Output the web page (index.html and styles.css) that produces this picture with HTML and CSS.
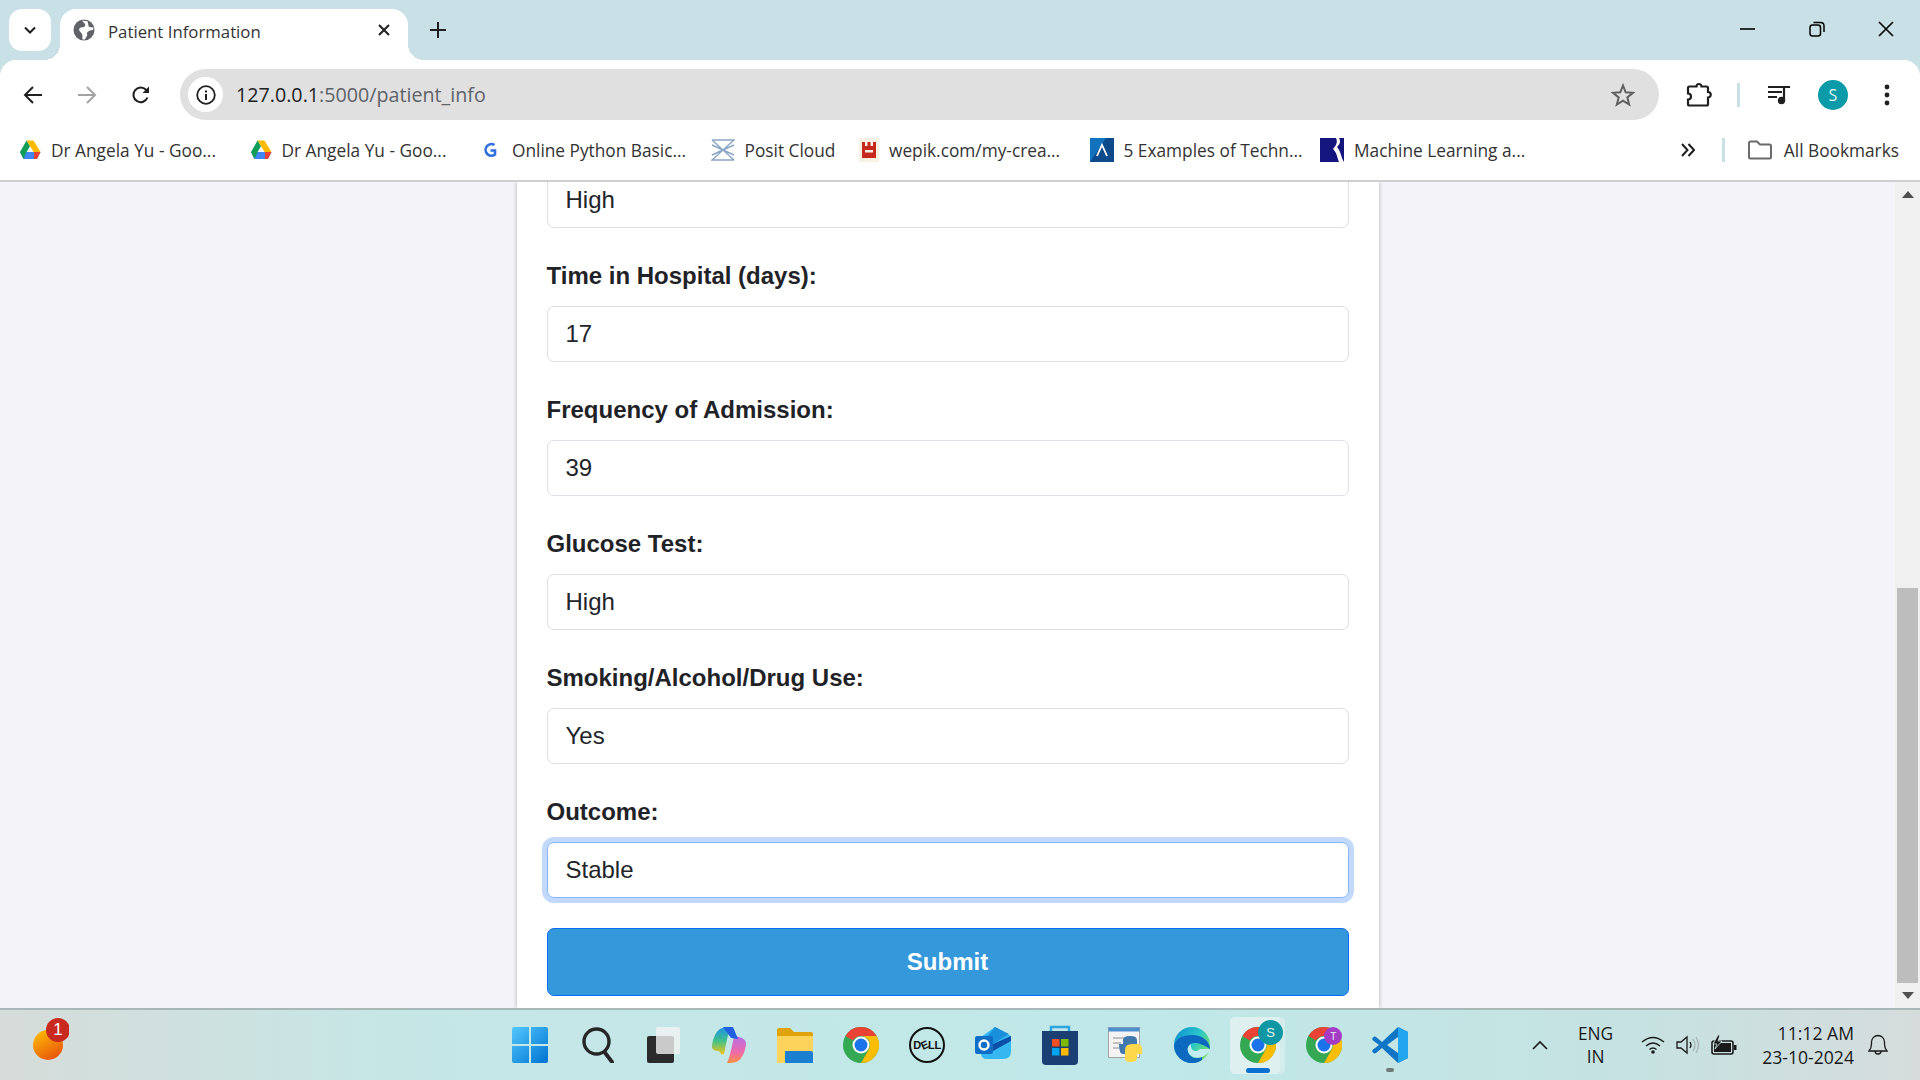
FILE: index.html
```html
<!DOCTYPE html>
<html lang="en">

<head>
    <meta charset="UTF-8">
    <title>Patient Information</title>
    <link rel="stylesheet" href="styles.css">
</head>

<body>
    <div class="tab-strip">
        <div class="tab-search">
            <svg width="16" height="16" viewBox="0 0 16 16"><path d="M3 5.5 8 10.5 13 5.5" fill="none" stroke="#1f1f1f" stroke-width="2"/></svg>
        </div>
        <div class="tab">
            <svg class="tab-globe" width="22" height="22" viewBox="0 0 22 22">
                <circle cx="11" cy="11" r="10.5" fill="#5f6368"/>
                <path d="M9 1.5C11 4 13 5 12 7 11 9 8 7.500 6.5 9.500 5 11.500 8 13 9 15 10 17 9 19 9.500 20.500L12 20.500C13 18 15 16.500 14 14.500 13.500 13 16 12 17 11.500L20 11 20.500 8.500 16 8C15 5.500 15 3 14.500 2.200Z" fill="#fff"/>
            </svg>
            <span class="tab-title">Patient Information</span>
            <svg width="14" height="14" viewBox="0 0 14 14"><path d="M2 2 12 12M12 2 2 12" stroke="#1f1f1f" stroke-width="2"/></svg>
        </div>
        <svg class="new-tab" width="16" height="16" viewBox="0 0 16 16"><path d="M8 0V16M0 8H16" stroke="#1f1f1f" stroke-width="2"/></svg>
        <div class="window-btns">
            <svg width="16" height="16" viewBox="0 0 16 16"><path d="M0 8H15" stroke="#000" stroke-width="1.6"/></svg>
            <svg width="16" height="16" viewBox="0 0 16 16" fill="none" stroke="#000" stroke-width="1.5"><rect x="1" y="4" width="10.5" height="11" rx="2.5"/><path d="M4.5 1.5H11.5Q15 1.500 15 5V11"/></svg>
            <svg width="16" height="16" viewBox="0 0 16 16"><path d="M1 1 15 15M15 1 1 15" stroke="#000" stroke-width="1.6"/></svg>
        </div>
    </div>

    <div class="toolbar">
        <svg class="nav-icon" width="20" height="20" viewBox="0 0 20 20" fill="none" stroke="#1f1f1f" stroke-width="2"><path d="M19 10H2M10 2 2 10 10 18"/></svg>
        <svg class="nav-icon" width="20" height="20" viewBox="0 0 20 20" fill="none" stroke="#a3a3a3" stroke-width="2"><path d="M1 10H18M10 2 18 10 10 18"/></svg>
        <svg class="nav-icon" width="20" height="20" viewBox="0 0 20 20" fill="none" stroke="#1f1f1f" stroke-width="2"><path d="M16.5 12.5A7.3 7.3 0 1 1 15 4.800L17.500 7"/><path d="M18 1.500V8H11.500" fill="#1f1f1f" stroke="none"/></svg>
        <div class="omnibox">
            <div class="site-info">
                <svg width="20" height="20" viewBox="0 0 20 20"><circle cx="10" cy="10" r="8.8" fill="none" stroke="#1f1f1f" stroke-width="1.8"/><rect x="9" y="9" width="2" height="6" fill="#1f1f1f"/><rect x="9" y="5.5" width="2" height="2" fill="#1f1f1f"/></svg>
            </div>
            <span class="url">127.0.0.1<span class="url-path">:5000/patient_info</span></span>
            <svg class="star" width="24" height="24" viewBox="0 0 24 24"><path d="M12 2.5 14.700 9.300 22 9.800 16.300 14.400 18.200 21.500 12 17.600 5.800 21.500 7.700 14.400 2 9.800 9.300 9.300Z" fill="none" stroke="#5f5f5f" stroke-width="2"/></svg>
        </div>
        <svg class="ext-icon" width="26" height="26" viewBox="0 0 26 26"><path d="M9 4.500H10.500A2.500 2.500 0 0 1 15.500 4.500H20.500A1.500 1.500 0 0 1 22 6V10A2.600 2.600 0 0 1 22 15.500V22A1.500 1.500 0 0 1 20.500 23.500H3.500A1.500 1.500 0 0 1 2 22V17.500A3 3 0 0 0 2 11.500V6A1.500 1.500 0 0 1 3.500 4.500Z" fill="none" stroke="#1f1f1f" stroke-width="2.2"/></svg>
        <div class="tool-sep"></div>
        <svg class="media-icon" width="24" height="22" viewBox="0 0 24 22"><path d="M1 3H17M1 8H15M1 13H10" stroke="#1f1f1f" stroke-width="2"/><path d="M17 16V3H23" fill="none" stroke="#1f1f1f" stroke-width="2.2"/><circle cx="14.5" cy="16.5" r="3.7" fill="#1f1f1f"/></svg>
        <div class="avatar">S</div>
        <svg class="menu-icon" width="6" height="24" viewBox="0 0 6 24"><circle cx="3" cy="4" r="2.4"/><circle cx="3" cy="12" r="2.4"/><circle cx="3" cy="20" r="2.4"/></svg>
    </div>

    <div class="bookmarks">
        <a class="bookmark">
            <svg width="22" height="20" viewBox="0 0 22 20"><path d="M7.5 0.500H14.500L21.500 12H14.500Z" fill="#ffba00"/><path d="M1 12H21.500L18 19H4.500Z" fill="#4285f4"/><path d="M15 12H21.500L18 19H15Z" fill="#ea4335"/><path d="M7.500 0.500 11 6.500 7.500 12 4.500 19 1 12Z" fill="#0f9d58"/><path d="M8.500 12H14L11 6.500Z" fill="#fff"/></svg>
            <span>Dr Angela Yu - Goo...</span>
        </a>
        <a class="bookmark">
            <svg width="22" height="20" viewBox="0 0 22 20"><path d="M7.5 0.500H14.500L21.500 12H14.500Z" fill="#ffba00"/><path d="M1 12H21.500L18 19H4.500Z" fill="#4285f4"/><path d="M15 12H21.500L18 19H15Z" fill="#ea4335"/><path d="M7.500 0.500 11 6.500 7.500 12 4.500 19 1 12Z" fill="#0f9d58"/><path d="M8.500 12H14L11 6.500Z" fill="#fff"/></svg>
            <span>Dr Angela Yu - Goo...</span>
        </a>
        <a class="bookmark">
            <svg width="22" height="20" viewBox="0 0 22 20" fill="none"><path d="M14.500 5A5.800 5.800 0 1 0 15 14.500V10.500H10.500" stroke="#2f6fe0" stroke-width="2.6"/></svg>
            <span>Online Python Basic...</span>
        </a>
        <a class="bookmark bookmark-short">
            <svg width="24" height="22" viewBox="0 0 24 22" fill="none" stroke="#8aa6c4" stroke-width="1.4"><path d="M1 1H23L1 21H23M1 1 23 21M1 6 23 16M23 6 1 16"/></svg>
            <span>Posit Cloud</span>
        </a>
        <a class="bookmark">
            <svg width="20" height="24" viewBox="0 0 20 24"><rect width="20" height="24" fill="#f8f2e4"/><path d="M3 4H6V8H8.500V4H11.500V8H14V4H17V20H3Z" fill="#c5281c"/><rect x="6" y="12" width="8" height="2.5" fill="#f8f2e4"/></svg>
            <span>wepik.com/my-crea...</span>
        </a>
        <a class="bookmark">
            <svg width="24" height="24" viewBox="0 0 24 24"><rect width="24" height="24" fill="#0d4a8c"/><path d="M0 0H16L0 24Z" fill="#1272bd"/><path d="M7 18 12 7 17 18" fill="none" stroke="#fff" stroke-width="1.8"/></svg>
            <span>5 Examples of Techn...</span>
        </a>
        <a class="bookmark">
            <svg width="24" height="24" viewBox="0 0 24 24"><rect width="24" height="24" fill="#15157e"/><path d="M16 0H19C21 3 20 6 17 9 21 13 21 20 24 24H19C17 19 17 15 13 11 16 8 18 4 16 0Z" fill="#fff"/></svg>
            <span>Machine Learning a...</span>
        </a>
        <svg class="more-marks" width="14" height="14" viewBox="0 0 14 14" fill="none" stroke="#1f1f1f" stroke-width="2"><path d="M1 1 6.500 7 1 13M7.500 1 13 7 7.500 13"/></svg>
        <div class="marks-sep"></div>
        <svg width="24" height="20" viewBox="0 0 24 20" fill="none" stroke="#6b6b6b" stroke-width="2"><path d="M1 3A1.500 1.500 0 0 1 2.500 1.500H9L12 4.500H21.500A1.500 1.500 0 0 1 23 6V17A1.500 1.500 0 0 1 21.500 18.500H2.500A1.500 1.500 0 0 1 1 17Z"/></svg>
        <span class="all-marks">All Bookmarks</span>
    </div>

    <div class="viewport">
        <div class="page">
            <form class="card">
                <div class="cut-field">
                    <input class="field-input" type="text" value="High">
                </div>
                <div class="field">
                    <label class="field-label">Time in Hospital (days):</label>
                    <input class="field-input" type="text" value="17">
                </div>
                <div class="field">
                    <label class="field-label">Frequency of Admission:</label>
                    <input class="field-input" type="text" value="39">
                </div>
                <div class="field">
                    <label class="field-label">Glucose Test:</label>
                    <input class="field-input" type="text" value="High">
                </div>
                <div class="field">
                    <label class="field-label">Smoking/Alcohol/Drug Use:</label>
                    <input class="field-input" type="text" value="Yes">
                </div>
                <div class="field">
                    <label class="field-label">Outcome:</label>
                    <input class="field-input focused" type="text" value="Stable">
                </div>
                <button class="submit-btn" type="button">Submit</button>
            </form>
        </div>
        <div class="scrollbar">
            <div class="scroll-arrow"><svg width="12" height="7" viewBox="0 0 12 7"><path d="M6 0 12 7H0Z" fill="#505050"/></svg></div>
            <div class="scroll-track">
                <div class="scroll-thumb"></div>
            </div>
            <div class="scroll-arrow"><svg width="12" height="7" viewBox="0 0 12 7"><path d="M0 0H12L6 7Z" fill="#505050"/></svg></div>
        </div>
    </div>

    <div class="taskbar">
        <div class="task-left">
            <svg width="36" height="44" viewBox="0 0 36 44">
                <defs><linearGradient id="sunGrad" x1="0" y1="0" x2="0.6" y2="1"><stop offset="0" stop-color="#ffc400"/><stop offset="1" stop-color="#e8590c"/></linearGradient></defs>
                <circle cx="15" cy="27" r="15" fill="url(#sunGrad)"/>
                <circle cx="25" cy="12" r="12" fill="#c92a1f"/>
            </svg>
            <span class="badge-num">1</span>
        </div>
        <div class="task-apps">
            <svg class="task-icon" width="36" height="36" viewBox="0 0 36 36">
                <defs><linearGradient id="winGrad" x1="0" y1="0" x2="1" y2="1"><stop offset="0" stop-color="#52c8fb"/><stop offset="1" stop-color="#0072d2"/></linearGradient></defs>
                <path d="M0 2Q0 0 2 0H17V17H0ZM19 0H34Q36 0 36 2V17H19ZM0 19H17V36H2Q0 36 0 34ZM19 19H36V34Q36 36 34 36H19Z" fill="url(#winGrad)"/>
            </svg>
            <svg class="task-icon" width="36" height="36" viewBox="0 0 36 36" fill="none" stroke="#262626"><circle cx="18.5" cy="14.5" r="12.500" stroke-width="3.4"/><path d="M26.500 25 34 35" stroke-width="3.8" stroke-linecap="round"/></svg>
            <svg class="task-icon" width="36" height="36" viewBox="0 0 36 36"><rect x="3" y="9" width="27" height="27" rx="2" fill="#2b2b2b"/><rect x="12" y="0" width="24" height="27" rx="2" fill="#f2f2f2" fill-opacity=".8"/></svg>
            <svg class="task-icon" width="36" height="36" viewBox="0 0 36 36">
                <defs><linearGradient id="copA" x1="0" y1="0" x2="0" y2="1"><stop offset="0" stop-color="#1f8fe8"/><stop offset=".5" stop-color="#3fc08a"/><stop offset="1" stop-color="#f5c518"/></linearGradient><linearGradient id="copB" x1="0" y1="0" x2="0" y2="1"><stop offset="0" stop-color="#b66ee8"/><stop offset=".6" stop-color="#ee6ba8"/><stop offset="1" stop-color="#f9913f"/></linearGradient></defs>
                <path d="M9 2Q12 0 20 0 17 6 14 22 13 32 8 24 0 24 1 18 3 6 9 2Z" fill="url(#copA)"/>
                <path d="M27 34Q24 36 16 36 19 30 22 14 23 8 28 10 36 12 35 18 33 30 27 34Z" fill="url(#copB)"/>
                <path d="M12 0H22L27 12 20 11Z" fill="#1f5fe0"/>
            </svg>
            <svg class="task-icon" width="36" height="36" viewBox="0 0 36 36"><path d="M0 3Q0 1 2 1H13L17 5H34Q36 5 36 7V10H0Z" fill="#e0a30c"/><path d="M0 9H36V34Q36 36 34 36H0Z" fill="#fdd35c"/><path d="M8 24H34Q36 24 36 26V36H8Z" fill="#1a7fd1"/></svg>
            <svg class="task-icon" width="36" height="36" viewBox="0 0 36 36">
                <circle cx="18" cy="18" r="18" fill="#34a853"/>
                <path d="M18 0A18 18 0 0 1 33.600 9H18A9 9 0 0 0 10 13.500L2.400 9A18 18 0 0 1 18 0Z" fill="#ea4335"/>
                <path d="M33.600 9A18 18 0 0 1 18 36L26 22A9 9 0 0 0 18 9Z" fill="#fbbc04"/>
                <circle cx="18" cy="18" r="8.5" fill="#fff"/><circle cx="18" cy="18" r="6.5" fill="#1a73e8"/>
            </svg>
            <div class="dell-logo"><span>D<i>E</i>LL</span></div>
            <svg class="task-icon" width="36" height="36" viewBox="0 0 36 36">
                <path d="M20 0 36 9V24Q36 32 28 32H12Q6 32 6 26V10Z" fill="#35b8f1"/>
                <path d="M20 0 34 7 16 18 10 12Z" fill="#1a8fdb"/>
                <path d="M36 9V14L18 24V17Z" fill="#0b4fa8"/>
                <rect x="0" y="9" width="18" height="18" rx="2" fill="#0f6fc8"/>
                <circle cx="9" cy="18" r="4.5" fill="none" stroke="#fff" stroke-width="2.4"/>
            </svg>
            <svg class="task-icon" width="36" height="40" viewBox="0 0 36 40">
                <path d="M9 8V2H27V8" fill="none" stroke="#2ba4e0" stroke-width="2.5"/>
                <path d="M0 6H36V36Q36 40 32 40H4Q0 40 0 36Z" fill="#1b3f72"/>
                <rect x="10" y="14" width="7.5" height="7.5" fill="#f25022"/><rect x="19" y="14" width="7.5" height="7.5" fill="#7fba00"/><rect x="10" y="23" width="7.5" height="7.5" fill="#00a4ef"/><rect x="19" y="23" width="7.5" height="7.5" fill="#ffb900"/>
            </svg>
            <svg class="task-icon" width="36" height="36" viewBox="0 0 36 36">
                <rect x="0.5" y="0.5" width="31" height="30" fill="#f4f4f4" stroke="#a5a5a5"/><rect x="0.5" y="0.5" width="31" height="4" fill="#4d8fd0"/>
                <path d="M5 11H16M5 16H13M5 21H11" stroke="#b0b0b0" stroke-width="1.5"/>
                <path d="M22 9Q15 9 15 13V17H11Q11 27 15 27H22Q29 27 29 22H17 29V13Q29 9 22 9Z" fill="#3f78ad"/>
                <path d="M22 35Q29 35 29 31V27H34Q35 17 30 17H24Q17 17 17 23V31Q17 35 22 35Z" fill="#ffd74a"/>
            </svg>
            <svg class="task-icon" width="36" height="36" viewBox="0 0 36 36">
                <defs><linearGradient id="edgeA" x1="0" y1="0" x2="1" y2="0.6"><stop offset="0" stop-color="#0a8bd0"/><stop offset=".6" stop-color="#2bc7c9"/><stop offset="1" stop-color="#6fe06a"/></linearGradient></defs>
                <circle cx="18" cy="18" r="18" fill="url(#edgeA)"/>
                <path d="M0 18A18 18 0 0 0 28 33L28 30C18 34 12 26 14 20 16 15 24 14 36 22 36 14 28 8 18 8 8 8 2 12 0 18Z" fill="#0d68c0"/>
                <path d="M14 20C12 27 20 33 28 30 32 28 35 26 36 22L26 22C22 26 16 24 17 17Z" fill="#c2ecf0"/>
            </svg>
            <div class="active-app">
                <svg width="36" height="36" viewBox="0 0 36 36">
                    <circle cx="18" cy="18" r="18" fill="#34a853"/>
                    <path d="M18 0A18 18 0 0 1 33.600 9H18A9 9 0 0 0 10 13.500L2.400 9A18 18 0 0 1 18 0Z" fill="#ea4335"/>
                    <path d="M33.600 9A18 18 0 0 1 18 36L26 22A9 9 0 0 0 18 9Z" fill="#fbbc04"/>
                    <circle cx="18" cy="18" r="8.5" fill="#fff"/><circle cx="18" cy="18" r="6.5" fill="#1a73e8"/>
                </svg>
                <span class="app-badge teal">S</span>
                <span class="active-bar"></span>
            </div>
            <div class="badged-app">
                <svg width="36" height="36" viewBox="0 0 36 36">
                    <circle cx="18" cy="18" r="18" fill="#34a853"/>
                    <path d="M18 0A18 18 0 0 1 33.600 9H18A9 9 0 0 0 10 13.500L2.400 9A18 18 0 0 1 18 0Z" fill="#ea4335"/>
                    <path d="M33.600 9A18 18 0 0 1 18 36L26 22A9 9 0 0 0 18 9Z" fill="#fbbc04"/>
                    <circle cx="18" cy="18" r="8.5" fill="#fff"/><circle cx="18" cy="18" r="6.5" fill="#1a73e8"/>
                </svg>
                <span class="app-badge purple">T</span>
            </div>
            <div class="vscode-app">
                <svg width="36" height="36" viewBox="0 0 36 36">
                    <path d="M26 0 36 5V31L26 36 10 21 4 26Q2.500 27 1 25.500 -.5 24 1 22.500L7 18 1 13.500Q-.5 12 1 10.500 2.500 9 4 10L10 15ZM26 10 15 18 26 26Z" fill="#0f75c4"/>
                    <path d="M26 0 36 5V31L26 36Z" fill="#24a5f0"/>
                </svg>
                <span class="running-dot"></span>
            </div>
        </div>
        <div class="tray">
            <svg width="16" height="10" viewBox="0 0 16 10" fill="none" stroke="#1a1a1a" stroke-width="1.6"><path d="M1 9 8 2 15 9"/></svg>
            <div class="lang">ENG<br>IN</div>
            <div class="tray-icons">
                <svg width="24" height="20" viewBox="0 0 24 20" fill="none" stroke="#1a1a1a" stroke-width="1.4"><path d="M1 7Q12 -2 23 7M5 11Q12 5 19 11M8.500 14.500Q12 11.500 15.500 14.500"/><circle cx="12" cy="17" r="1.8" fill="#1a1a1a" stroke="none"/></svg>
                <svg width="24" height="20" viewBox="0 0 24 20" fill="none" stroke="#1a1a1a" stroke-width="1.3"><path d="M1 7H5L11 2V18L5 13H1Z"/><path d="M14 7Q16 10 14 13"/><path d="M17 4Q21 10 17 16M20 2Q25 10 20 18" stroke="#a9b5b5"/></svg>
                <svg width="26" height="20" viewBox="0 0 26 20"><rect x="1" y="6" width="21" height="13" rx="2" fill="none" stroke="#1a1a1a" stroke-width="1.6"/><rect x="3" y="8" width="17" height="9" fill="#1a1a1a"/><rect x="23" y="10" width="2.5" height="5" fill="#1a1a1a"/><path d="M7 0 2 9H6L4 14 11 6H7L9 0Z" fill="#1a1a1a" stroke="#cfe6e6" stroke-width=".8"/></svg>
            </div>
            <div class="clock">11:12 AM<br>23-10-2024</div>
            <svg width="20" height="22" viewBox="0 0 20 22" fill="none" stroke="#1a1a1a" stroke-width="1.3"><path d="M1 17Q3.500 14 3.500 10V8A6.500 6.500 0 0 1 16.500 8V10Q16.500 14 19 17Z"/><path d="M7 17A3 3 0 0 0 13 17"/></svg>
        </div>
    </div>
</body>

</html>
```

FILE: styles.css
```css
* {
    box-sizing: border-box;
}

html,
body {
    margin: 0;
    height: 1080px;
    overflow: hidden;
}

body {
    font-family: "Open Sans", "Noto Sans", sans-serif;
    display: flex;
    flex-direction: column;
    color: #1f1f1f;
    background: #c9e1e6;
}

/* chrome: tabs */
.tab-strip {
    height: 60px;
    flex-shrink: 0;
    display: flex;
    align-items: flex-end;
    padding-left: 9px;
}

.tab-search {
    width: 42px;
    height: 42px;
    margin-bottom: 9px;
    background: #fff;
    border-radius: 13px;
    display: flex;
    align-items: center;
    justify-content: center;
}

.tab {
    position: relative;
    width: 348px;
    height: 51px;
    margin-left: 9px;
    background: #fff;
    border-radius: 16px 16px 0 0;
    display: flex;
    align-items: center;
    padding: 0 17px 9px 13px;
}

.tab::before,
.tab::after {
    content: "";
    position: absolute;
    bottom: 0;
    width: 16px;
    height: 16px;
}

.tab::before {
    left: -16px;
    background: radial-gradient(circle at 0 0, transparent 16px, #fff 16px);
}

.tab::after {
    right: -16px;
    background: radial-gradient(circle at 100% 0, transparent 16px, #fff 16px);
}

.tab-globe {
    flex-shrink: 0;
}

.tab-title {
    font-size: 16.8px;
    margin: 2px 0 0 13px;
    flex: 1;
    color: #333;
}

.new-tab {
    margin: 0 0 22px 22px;
}

.window-btns {
    margin-left: auto;
    display: flex;
    gap: 53px;
    padding-right: 26px;
    margin-bottom: 23px;
}

/* chrome: toolbar */
.toolbar {
    height: 60px;
    flex-shrink: 0;
    display: flex;
    align-items: center;
    background: #fff;
    border-radius: 16px 16px 0 0;
    padding: 9px 0 0 23px;
}

.nav-icon {
    flex-shrink: 0;
}

.nav-icon + .nav-icon {
    margin-left: 34px;
}

.omnibox {
    width: 1479px;
    height: 51px;
    margin-left: 29px;
    background: #e0e0e0;
    border-radius: 26px;
    display: flex;
    align-items: center;
    padding: 0 24px 0 8px;
}

.site-info {
    width: 35px;
    height: 35px;
    border-radius: 50%;
    background: #fff;
    display: flex;
    align-items: center;
    justify-content: center;
}

.url {
    font-size: 19.7px;
    margin-left: 13px;
    color: #1f1f1f;
}

.url-path {
    color: #5f6368;
}

.star {
    margin-left: auto;
}

.ext-icon {
    margin-left: 27px;
}

.tool-sep {
    width: 3px;
    height: 24px;
    background: #c9e1e6;
    margin-left: 25px;
}

.media-icon {
    margin-left: 27px;
}

.avatar {
    width: 30px;
    height: 30px;
    margin-left: 27px;
    border-radius: 50%;
    background: #0b9aa8;
    color: #e6f6f7;
    font-size: 16px;
    display: flex;
    align-items: center;
    justify-content: center;
}

.menu-icon {
    margin-left: 36px;
    fill: #1f1f1f;
}

/* chrome: bookmarks */
.bookmarks {
    height: 62px;
    flex-shrink: 0;
    display: flex;
    align-items: center;
    padding: 0 21px 0 19px;
    border-bottom: 2px solid #cfcfcf;
    background: #fff;
}

.bookmark {
    width: 230.5px;
    display: flex;
    align-items: center;
    gap: 10px;
    font-size: 17.3px;
    color: #333;
    white-space: nowrap;
}

.bookmark-short {
    width: 148.5px;
}

.more-marks {
    margin-left: auto;
}

.marks-sep {
    width: 3px;
    height: 24px;
    background: #c9e1e6;
    margin: 0 23px 0 27px;
}

.all-marks {
    font-size: 17.3px;
    margin-left: 12px;
    color: #333;
}

/* page */
.viewport {
    height: 826px;
    flex-shrink: 0;
    display: flex;
    overflow: hidden;
}

.page {
    flex: 1;
    background: #f3f3f9;
    display: flex;
    justify-content: center;
    overflow: hidden;
}

.card {
    width: 862px;
    height: 826px;
    background: #fff;
    box-shadow: 0 0 4px rgba(0, 0, 0, 0.3);
    padding: 0 30px;
    font-family: "Liberation Sans", Arial, sans-serif;
}

.cut-field {
    height: 56px;
    margin-top: -10px;
}

.field {
    margin-top: 35px;
}

.field-label {
    display: block;
    font-size: 24px;
    font-weight: 700;
    color: #1f2226;
    line-height: 26px;
    margin-bottom: 17px;
}

.field-input {
    display: block;
    width: 100%;
    height: 56px;
    padding: 0 18px;
    border: 1px solid #dcdfe3;
    border-radius: 7px;
    font-family: inherit;
    font-size: 24px;
    color: #212529;
    background: #fff;
}

.focused {
    border-color: #86b7fe;
    box-shadow: 0 0 0 5px #c2d9fc;
}

.submit-btn {
    display: block;
    width: 100%;
    height: 68px;
    margin-top: 30px;
    border: 1px solid #0d6efd;
    border-radius: 7px;
    background: #3498db;
    color: #fff;
    font-family: inherit;
    font-size: 24px;
    font-weight: 700;
}

.scrollbar {
    width: 25px;
    background: #f0f0f0;
    display: flex;
    flex-direction: column;
}

.scroll-arrow {
    height: 25px;
    display: flex;
    align-items: center;
    justify-content: center;
}

.scroll-track {
    flex: 1;
    display: flex;
    flex-direction: column;
    justify-content: flex-end;
    padding: 0 2px;
}

.scroll-thumb {
    height: 395px;
    background: #bdbdbd;
}

/* taskbar */
.taskbar {
    height: 72px;
    flex-shrink: 0;
    border-top: 2px solid #a8b8b8;
    background: linear-gradient(to right, #d6dcd9 0%, #c6e6e6 20%, #c0e8e8 60%, #c6e2e2 85%, #d6dcdc 100%);
    display: flex;
    align-items: center;
}

.task-left {
    width: 512px;
    flex-shrink: 0;
    padding: 8px 0 0 33px;
    position: relative;
    height: 100%;
}

.badge-num {
    position: absolute;
    left: 50px;
    top: 10px;
    width: 16px;
    text-align: center;
    font-family: "Liberation Sans", sans-serif;
    font-size: 17px;
    color: #fff;
}

.task-apps {
    display: flex;
    align-items: center;
    gap: 30.2px;
}

.task-icon {
    flex-shrink: 0;
}

.dell-logo {
    width: 36px;
    height: 36px;
    border: 2.5px solid #111;
    border-radius: 50%;
    display: flex;
    align-items: center;
    justify-content: center;
    font-family: "Liberation Sans", sans-serif;
    font-size: 11px;
    font-weight: 700;
    color: #111;
    letter-spacing: -0.3px;
}

.dell-logo i {
    display: inline-block;
    transform: rotate(-25deg);
    font-style: normal;
}

.active-app,
.badged-app,
.vscode-app {
    position: relative;
    width: 36px;
    height: 36px;
}

.active-app::before {
    content: "";
    position: absolute;
    left: -10px;
    right: -4px;
    top: -10px;
    bottom: -11px;
    background: #dff0f0;
    border-radius: 5px;
    box-shadow: 5px 0 0 0 #d4ecec;
}

.active-app svg,
.badged-app svg,
.vscode-app svg {
    position: relative;
    display: block;
}

.app-badge {
    position: absolute;
    border-radius: 50%;
    display: flex;
    align-items: center;
    justify-content: center;
    color: #e6f0f0;
    font-family: "Liberation Sans", sans-serif;
}

.teal {
    left: 18px;
    top: -7px;
    width: 25px;
    height: 25px;
    background: #0f97a3;
    font-size: 13px;
}

.purple {
    left: 18px;
    top: 0;
    width: 18px;
    height: 18px;
    background: #a43cc4;
    font-size: 10px;
}

.active-bar {
    position: absolute;
    left: 6px;
    bottom: -10px;
    width: 24px;
    height: 5px;
    background: #0a70d0;
    border-radius: 3px;
}

.running-dot {
    position: absolute;
    left: 14px;
    bottom: -9px;
    width: 8px;
    height: 4px;
    border-radius: 2px;
    background: #6f7b7b;
}

.tray {
    margin-left: auto;
    display: flex;
    align-items: center;
    padding-right: 32px;
    font-size: 17.3px;
    color: #1a1a1a;
}

.lang {
    text-align: center;
    line-height: 23px;
    margin-left: 30px;
}

.tray-icons {
    display: flex;
    align-items: center;
    gap: 11px;
    margin-left: 28px;
}

.clock {
    text-align: right;
    font-size: 17.6px;
    line-height: 24px;
    margin-left: 25px;
    margin-right: 14px;
}
```
